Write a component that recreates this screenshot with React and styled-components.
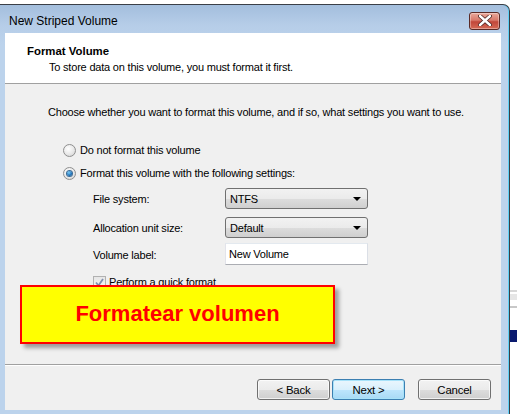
import React from "react";
import styled, { createGlobalStyle } from "styled-components";

const Global = createGlobalStyle`
  html, body { margin: 0; padding: 0; background: #ffffff; }
  body { font-family: "Liberation Sans", Arial, sans-serif; font-size: 11px; letter-spacing: -0.2px; color: #000; }
  * { box-sizing: border-box; }
`;

const Page = styled.div`
  position: relative;
  width: 517px;
  height: 414px;
  overflow: hidden;
  display: flex;
  background: #ffffff;
  white-space: nowrap;
`;

const Window = styled.div`
  margin-top: 4px;
  width: 510px;
  height: 420px;
  flex: none;
  border-top: 1px solid #3a3f47;
  border-right: 1px solid #3a3f47;
  border-top-right-radius: 7px;
  background: linear-gradient(180deg, #a3bedd 0px, #b6cde8 20px, #bcd3ec 40px, #bcd3ec 100%);
  box-shadow: inset -1px 0 0 #5fd0f5;
  display: flex;
  flex-direction: column;
`;

const TitleBar = styled.div`
  height: 28px;
  display: flex;
  align-items: center;
  justify-content: space-between;
  padding: 0 9px 0 9px;
`;

const Title = styled.span`
  font-size: 12px;
  letter-spacing: 0;
  color: #000;
  margin-top: 4px;
`;

const CloseBtn = styled.div`
  width: 31px;
  height: 18px;
  margin-top: 3px;
  border: 1px solid #5a2a26;
  border-radius: 3px;
  background: linear-gradient(180deg, #e9a99b 0%, #d8796a 45%, #c2473a 55%, #d56a55 100%);
  display: flex;
  align-items: center;
  justify-content: center;
  box-shadow: inset 0 0 0 1px rgba(255,255,255,0.35);
`;

const Client = styled.div`
  margin-left: 5px;
  width: 496px;
  height: 377px;
  display: flex;
  flex-direction: column;
  background: #f0f0f0;
`;

const Header = styled.div`
  height: 51px;
  background: #ffffff;
  border-bottom: 1px solid #a0a0a0;
  padding: 10px 0 0 22px;
`;

const HeaderTitle = styled.div`
  font-weight: bold;
  font-size: 11.4px;
  letter-spacing: 0;
  line-height: 16px;
`;

const HeaderSub = styled.div`
  margin-left: 22px;
  line-height: 16px;
`;

const Body = styled.div`
  flex: 1;
  padding: 20px 0 0 43px;
  display: flex;
  flex-direction: column;
`;

const Intro = styled.div`
  line-height: 16px;
`;

const RadioRow = styled.label`
  display: flex;
  align-items: center;
  gap: 4px;
  height: 16px;
  margin-left: 15px;
  margin-top: ${(p) => p.$mt}px;
`;

const RadioCircle = styled.span`
  width: 13px;
  height: 13px;
  border-radius: 50%;
  border: 1px solid #8f8f8f;
  background: radial-gradient(circle at 40% 35%, #ffffff 0%, #eaeaea 50%, #cfcfcf 100%);
  display: flex;
  align-items: center;
  justify-content: center;
`;

const RadioDot = styled.span`
  width: 5px;
  height: 5px;
  border-radius: 50%;
  background: radial-gradient(circle at 40% 35%, #7fd0f8 0%, #1b6fb8 60%, #0d4a80 100%);
  box-shadow: 0 0 0 1px #3c6c95;
`;

const Form = styled.div`
  margin-left: 45px;
  margin-top: 7px;
  display: grid;
  grid-template-columns: 132px 143px;
  row-gap: 8px;
  align-items: center;
`;

const FieldLabel = styled.span`
  line-height: 16px;
  align-self: ${(p) => (p.$low ? "end" : "center")};
  padding-bottom: ${(p) => (p.$low ? "2px" : "0")};
`;

const Combo = styled.div`
  height: 21px;
  border: 1px solid #707070;
  border-radius: 3px;
  background: linear-gradient(180deg, #f2f2f2 0%, #ebebeb 50%, #dddddd 51%, #cfcfcf 100%);
  display: flex;
  align-items: center;
  justify-content: space-between;
  padding: 1px 6px 0 4px;
`;

const Arrow = styled.span`
  width: 0;
  height: 0;
  border-left: 4px solid transparent;
  border-right: 4px solid transparent;
  border-top: 4px solid #000;
`;

const TextBox = styled.div`
  height: 22px;
  margin-top: -3px;
  border: 1px solid #abadb3;
  border-top-color: #e3e9ef;
  border-left-color: #e2e3ea;
  border-right-color: #dbdfe6;
  background: #ffffff;
  padding: 2px 0 0 3px;
  line-height: 16px;
`;

const CheckRow = styled.div`
  display: flex;
  align-items: center;
  gap: 3px;
  margin-left: 45px;
  margin-top: 9px;
  height: 16px;
`;

const CheckBox = styled.span`
  width: 13px;
  height: 13px;
  border: 1px solid #b1b1b1;
  background: linear-gradient(180deg, #e6e6e6, #f8f8f8);
  display: flex;
  align-items: center;
  justify-content: center;
`;

const Footer = styled.div`
  height: 46px;
  border-top: 1px solid #a0a0a0;
  box-shadow: inset 0 1px 0 #ffffff;
  display: flex;
  justify-content: flex-end;
  padding: 14px 10px 0 0;
`;

const Button = styled.div`
  width: 73px;
  height: 21px;
  margin-left: ${(p) => p.$ml}px;
  border: 1px solid ${(p) => (p.$primary ? "#3c7fb1" : "#707070")};
  border-radius: 3px;
  background: ${(p) =>
    p.$primary
      ? "linear-gradient(180deg, #eaf6fd 0%, #d9f0fc 50%, #bee6fd 51%, #a7d9f5 100%)"
      : "linear-gradient(180deg, #f2f2f2 0%, #ebebeb 50%, #dddddd 51%, #cfcfcf 100%)"};
  box-shadow: inset 0 0 0 1px ${(p) => (p.$primary ? "#a7e2f9" : "rgba(255,255,255,0.7)")};
  display: flex;
  align-items: center;
  justify-content: center;
  line-height: 16px;
  font-size: 11.4px;
`;

const SideStrip = styled.div`
  flex: 1;
  display: flex;
  flex-direction: column;
  padding-top: 290px;
`;

const Stripe = styled.div`
  height: ${(p) => p.$h}px;
  margin-top: ${(p) => p.$mt}px;
  background: ${(p) => p.$c};
`;

const Callout = styled.div`
  position: absolute;
  left: 20px;
  top: 285px;
  width: 315px;
  height: 59px;
  border: 2px solid #ff0000;
  background: #ffff00;
  box-shadow: 4px 4px 4px rgba(0, 0, 0, 0.35);
  display: flex;
  align-items: center;
  justify-content: center;
`;

const CalloutText = styled.span`
  font-family: "Liberation Sans", Arial, sans-serif;
  font-weight: bold;
  font-size: 22px;
  letter-spacing: 0;
  color: #ff0000;
  margin-top: -2px;
`;

export default function App() {
  return (
    <>
      <Global />
      <Page>
        <Window>
          <TitleBar>
            <Title>New Striped Volume</Title>
            <CloseBtn>
              <svg width="14" height="11" viewBox="0 0 14 11">
                <path d="M2 1 L12 10 M12 1 L2 10" stroke="#4a2420" strokeWidth="4" strokeLinecap="round" />
                <path d="M2 1 L12 10 M12 1 L2 10" stroke="#ffffff" strokeWidth="2.4" strokeLinecap="round" />
              </svg>
            </CloseBtn>
          </TitleBar>
          <Client>
            <Header>
              <HeaderTitle>Format Volume</HeaderTitle>
              <HeaderSub>To store data on this volume, you must format it first.</HeaderSub>
            </Header>
            <Body>
              <Intro>Choose whether you want to format this volume, and if so, what settings you want to use.</Intro>
              <RadioRow $mt={22}>
                <RadioCircle />
                <span>Do not format this volume</span>
              </RadioRow>
              <RadioRow $mt={7}>
                <RadioCircle>
                  <RadioDot />
                </RadioCircle>
                <span>Format this volume with the following settings:</span>
              </RadioRow>
              <Form>
                <FieldLabel>File system:</FieldLabel>
                <Combo>
                  <span>NTFS</span>
                  <Arrow />
                </Combo>
                <FieldLabel>Allocation unit size:</FieldLabel>
                <Combo>
                  <span>Default</span>
                  <Arrow />
                </Combo>
                <FieldLabel $low>Volume label:</FieldLabel>
                <TextBox>New Volume</TextBox>
              </Form>
              <CheckRow>
                <CheckBox>
                  <svg width="9" height="9" viewBox="0 0 9 9">
                    <path d="M1 4.5 L3.5 7.5 L8 1" stroke="#7f8fb0" strokeWidth="1.8" fill="none" />
                  </svg>
                </CheckBox>
                <span>Perform a quick format</span>
              </CheckRow>
            </Body>
            <Footer>
              <Button $ml={0}>&lt; Back</Button>
              <Button $ml={2} $primary>Next &gt;</Button>
              <Button $ml={13}>Cancel</Button>
            </Footer>
          </Client>
        </Window>
        <SideStrip>
          <Stripe $h={2} $mt={0} $c="#d8d8d8" />
          <Stripe $h={6} $mt={2} $c="#e6e6e6" />
          <Stripe $h={2} $mt={6} $c="#c8c8c8" />
          <Stripe $h={12} $mt={22} $c="#0a1a6e" />
        </SideStrip>
        <Callout>
          <CalloutText>Formatear volumen</CalloutText>
        </Callout>
      </Page>
    </>
  );
}
